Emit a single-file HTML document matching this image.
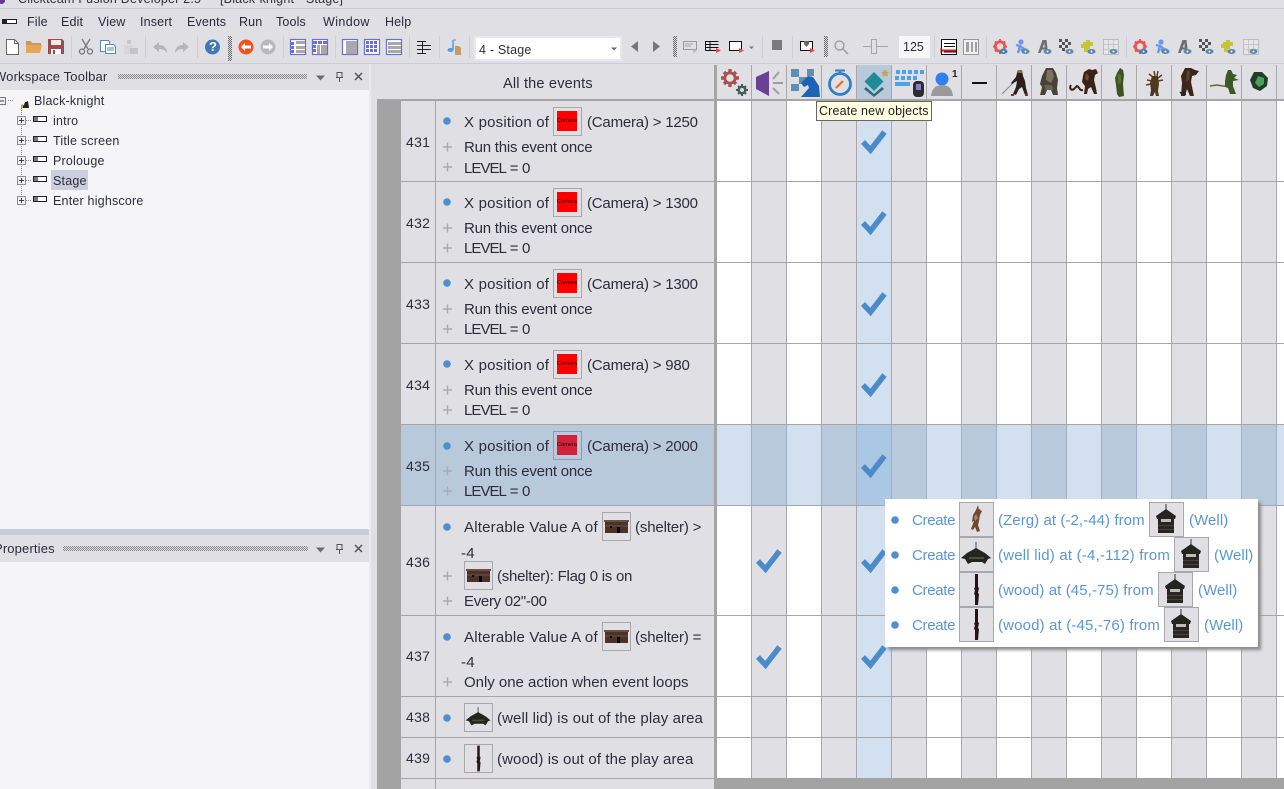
<!DOCTYPE html>
<html><head><meta charset="utf-8"><title>Clickteam Fusion Developer 2.5</title>
<style>
html,body{margin:0;padding:0;background:#dfdfe4}
body{width:1284px;height:789px;overflow:hidden;position:relative;font-family:"Liberation Sans",sans-serif;color:#2b2b38}
.b{position:absolute}
.t{position:absolute;white-space:nowrap;line-height:25px;font-size:15px;letter-spacing:.2px;color:#2d2d3a}
.n{font-size:14px;letter-spacing:.3px;line-height:20px}
.m{font-size:12.5px;letter-spacing:.15px;color:#2b2b3a;top:11px;line-height:23px}
.tr{font-size:12.5px;letter-spacing:.2px;line-height:23px}
.p{color:#5a96d6;letter-spacing:.07px;line-height:24px}
.c{letter-spacing:-.3px}
.cam{letter-spacing:-.2px}
.run{letter-spacing:-.22px}
.lv{letter-spacing:-.95px;word-spacing:1.2px}
.sh{letter-spacing:-.15px}
svg{position:absolute;left:0;top:0;overflow:visible}
</style></head><body>
<svg width="0" height="0" style="position:absolute">
<defs>
<pattern id="dp" width="2" height="2" patternUnits="userSpaceOnUse"><rect width="1" height="1" fill="#666"/><rect x="1" y="1" width="1" height="1" fill="#666"/></pattern>
<pattern id="dq" width="2" height="2" patternUnits="userSpaceOnUse"><rect width="1" height="1" fill="#8a8a8e"/><rect x="1" y="1" width="1" height="1" fill="#8a8a8e"/></pattern>
<symbol id="well" viewBox="0 0 35 35"><path d="M17 2v7" stroke="#333" stroke-width="1"/><path d="M17 7l10 7-1 3H8l-1-3z" fill="#23261f"/><path d="M9 16h16v15H9z" fill="#28261f"/><path d="M12 17h10v3H12z" fill="#bdbdb8"/><path d="M9 23h16v1H9zM9 27h16v1H9z" fill="#45443c"/></symbol>
<symbol id="lid" viewBox="0 0 35 35"><path d="M17 5v8" stroke="#444" stroke-width="1"/><path d="M17 11l9 5 6 5-3 1-3 5-3-2H13l-4 2-3-5-4-1 6-5z" fill="#22261e"/><path d="M10 20h15v2H10z" fill="#4a4c42"/></symbol>
<symbol id="wood" viewBox="0 0 35 35"><path d="M16 2h3v13l1 1-1 5 1 1-1 11h-3V23l-1-1 1-4-1-1 1-2z" fill="#2a1412"/></symbol>
<symbol id="zerg" viewBox="0 0 35 35"><path d="M19 3l1 5 3 1-2 4-1 6-1 4 1 3 1 3-3 1-2-5-2 3-2-1 3-8-2 1 1-7 3-5z" fill="#6e4a35"/><path d="M17 12l2 4-3 3-1-4z" fill="#a98468"/><path d="M20 7l2 1-2 2z" fill="#a53d28"/></symbol>
<symbol id="shelter" viewBox="0 0 29 29"><path d="M2 8h25v2H2z" fill="#6b4f45"/><path d="M3 10h23v11H3z" fill="#4b3229"/><path d="M3 13h23v2H3z" fill="#5e4238"/><path d="M15 15h3v6h-3zM8 14h2v2H8z" fill="#000"/></symbol>
<g id="gear-r"><circle cx="7" cy="7.5" r="4.7" fill="none" stroke="#ef5350" stroke-width="2.8"/><path d="M7 0v3M7 12v3M0 7.5h3M11 7.5h3M2 2.5l2 2M10 10.500l2 2M12 2.500l-2 2M2 12.500l2-2" stroke="#ef5350" stroke-width="2"/><ellipse cx="10.500" cy="12.500" rx="4" ry="2.500" fill="#3d7fb5"/><circle cx="10.500" cy="12.500" r="1" fill="#fff"/></g>
<g id="eye"><ellipse cx="10.500" cy="12.500" rx="4" ry="2.500" fill="#5b86aa"/><circle cx="10.500" cy="12.500" r="1" fill="#fff"/></g>
<g id="eyes">
<use href="#gear-r"/>
<g transform="translate(22 0)"><circle cx="6" cy="3" r="2.600" fill="#6d95ee"/><path d="M1 6l4 1 4 3 3 1M5 7L3 14M6 10l3 4" stroke="#6d95ee" stroke-width="2.400" fill="none"/><use href="#eye"/></g>
<g transform="translate(44 0)"><path d="M1 14L5.500 1H9.500L11 14H8.500L8 10.500H5L3.500 14zM5.800 8.500H7.800L7.300 4z" fill="#6e6e72"/><use href="#eye"/></g>
<g transform="translate(66 0)" fill="#555"><path d="M0 0h3v3H0zM6 0h3v3H6zM3 3h3v3H3zM9 3h3v3H9zM0 6h3v3H0zM6 6h3v3H6zM3 9h3v3H3z"/><use href="#eye"/></g>
<g transform="translate(88 0)"><path d="M2 3h3V1h4v2h3v4h-3v3H7v3H3V9H0V5h2z" fill="#c9c33c"/><use href="#eye"/></g>
<g transform="translate(110 0)"><rect x=".5" y=".5" width="15" height="15" fill="#e6e6e8" stroke="#bdbdbd"/><path d="M5.500 1v14M10.500 1v14M1 5.500h14M1 10.500h14" stroke="#c6c6c6"/><use href="#eye"/></g>
</g>
</defs></svg>

<!-- title -->
<div class="b" style="left:0;top:0;width:1284px;height:9px;overflow:hidden;border-bottom:1px solid #c9c9dc;box-sizing:border-box">
<div class="t" style="left:18px;top:-11px;font-size:12.500px;line-height:20px;color:#333">Clickteam Fusion Developer 2.5</div>
<div class="t" style="left:220px;top:-11px;font-size:12.500px;line-height:20px;color:#333">[Black-knight - Stage]</div>
<div class="b" style="left:-2px;top:-3px;width:7px;height:7px;border-radius:50%;background:#5b3a9c"></div>
</div>
<!-- menu -->
<div class="b" style="left:2px;top:19px;background:#fff;border:1px solid #222;border-left-width:5px;box-sizing:content-box;width:9px;height:3px"></div>
<div class="t m" style="left:27px">File</div><div class="t m" style="left:61px">Edit</div><div class="t m" style="left:98px">View</div><div class="t m" style="left:140px">Insert</div><div class="t m" style="left:187px">Events</div><div class="t m" style="left:239px">Run</div><div class="t m" style="left:276px">Tools</div><div class="t m" style="left:323px;letter-spacing:.4px">Window</div><div class="t m" style="left:385px">Help</div>
<div class="b" style="left:0;top:63px;width:1284px;height:1px;background:#cbcbdc"></div>

<!-- left panels -->
<div class="b" style="left:0;top:90px;width:369px;height:439px;background:#f5f5f8"></div>
<div class="b" style="left:0;top:529px;width:369px;height:6px;background:#c9cbdb"></div>
<div class="b" style="left:0;top:562px;width:369px;height:227px;background:#f5f5f8"></div>
<div class="b" style="left:369px;top:64px;width:2px;height:725px;background:#e9e9ee"></div>
<div class="t" style="left:-6px;top:67px;font-size:13px;letter-spacing:.15px;line-height:20px">Workspace Toolbar</div>
<div class="t" style="left:-6px;top:539px;font-size:13px;letter-spacing:.15px;line-height:20px">Properties</div>
<div class="b" style="left:51px;top:170px;width:37px;height:20px;background:#cccedd"></div>
<div class="t tr" style="left:34px;top:90px">Black-knight</div>
<div class="t tr" style="left:53px;top:110px">intro</div>
<div class="t tr" style="left:53px;top:130px">Title screen</div>
<div class="t tr" style="left:53px;top:150px">Prolouge</div>
<div class="t tr" style="left:53px;top:170px">Stage</div>
<div class="t tr" style="left:53px;top:190px">Enter highscore</div>

<!-- event editor base -->
<div class="b" style="left:377px;top:65px;width:907px;height:34px;background:#dfdfe4"></div>
<div class="b" style="left:377px;top:99px;width:24px;height:690px;background:#a3a3a3"></div>
<div class="b" style="left:377px;top:99px;width:907px;height:2px;background:#a5a5a5"></div>
<div class="b" style="left:717px;top:101px;width:567px;height:677px;background:repeating-linear-gradient(90deg,#fff 0 34px,#a8a8ac 34px 35px,#dfdfe4 35px 69px,#a8a8ac 69px 70px)"></div>
<div class="b" style="left:857px;top:65px;width:34px;height:34px;background:#b9c9dc"></div>
<div class="b" style="left:857px;top:101px;width:34px;height:677px;background:#d2e0f0"></div>
<div class="b" style="left:401px;top:425px;width:313px;height:80px;background:#b9c9dc"></div>
<div class="b" style="left:717px;top:425px;width:567px;height:80px;background:repeating-linear-gradient(90deg,#d2e0f0 0 34px,#9fb0c6 34px 35px,#b9c9dc 35px 69px,#9fb0c6 69px 70px)"></div>
<div class="b" style="left:857px;top:425px;width:34px;height:80px;background:#aac7e4"></div>
<div class="b" style="left:435px;top:101px;width:1px;height:688px;background:#a5a5aa"></div>
<div class="b" style="left:714px;top:65px;width:3px;height:713px;background:#a5a5a5"></div>
<div class="b" style="left:714px;top:778px;width:570px;height:11px;background:#a3a3a3"></div>
<div class="b" style="left:401px;top:181px;width:883px;height:1px;background:#a5a5aa"></div>
<div class="b" style="left:401px;top:262px;width:883px;height:1px;background:#a5a5aa"></div>
<div class="b" style="left:401px;top:343px;width:883px;height:1px;background:#a5a5aa"></div>
<div class="b" style="left:401px;top:424px;width:883px;height:1px;background:#a5a5aa"></div>
<div class="b" style="left:401px;top:505px;width:883px;height:1px;background:#a5a5aa"></div>
<div class="b" style="left:401px;top:615px;width:883px;height:1px;background:#a5a5aa"></div>
<div class="b" style="left:401px;top:696px;width:883px;height:1px;background:#a5a5aa"></div>
<div class="b" style="left:401px;top:737px;width:883px;height:1px;background:#a5a5aa"></div>
<div class="b" style="left:401px;top:778px;width:313px;height:1px;background:#a5a5aa"></div>
<div class="b" style="left:751px;top:65px;width:533px;height:34px;background:repeating-linear-gradient(90deg,#a8a8ac 0 1px,transparent 1px 35px)"></div>

<div class="t" style="left:503px;top:73px;font-size:14.500px;letter-spacing:.2px;line-height:22px">All the events</div>

<!-- big icon svg -->
<svg width="1284" height="789" viewBox="0 0 1284 789">
<!-- dotted grips -->
<g shape-rendering="crispEdges">
<rect x="118" y="74" width="189" height="5" fill="url(#dq)"/><rect x="63" y="546" width="245" height="5" fill="url(#dq)"/>
<rect x="228" y="36" width="4" height="25" fill="url(#dp)"/><rect x="673" y="36" width="4" height="21" fill="url(#dp)"/><rect x="824" y="36" width="4" height="21" fill="url(#dp)"/>
</g>
<!-- tree -->
<g fill="none" stroke="#8a8a8a" stroke-dasharray="1 1">
<path d="M21.500 108V200M8 100.500H14M26 120.500H32M26 140.500H32M26 160.500H32M26 180.500H32M26 200.500H32"/></g>
<g id="tree-boxes" fill="#f0f0f3" stroke="#8f8f8f">
<rect x="-2.500" y="97.500" width="8" height="7" stroke="#7a7a7a"/>
<rect x="17.500" y="116.500" width="8" height="8"/><rect x="17.500" y="136.500" width="8" height="8"/><rect x="17.500" y="156.500" width="8" height="8"/><rect x="17.500" y="176.500" width="8" height="8"/><rect x="17.500" y="196.500" width="8" height="8"/></g>
<path d="M0 101h4M19 120.500h5M21.500 118v5M19 140.500h5M21.500 138v5M19 160.500h5M21.500 158v5M19 180.500h5M21.500 178v5M19 200.500h5M21.500 198v5" stroke="#2e3a70" fill="none"/>
<path d="M21 107l3-2 1-3 1 0 2-1 1 7h-8z" fill="#222"/><path d="M21 105l2-1v4h-2z" fill="#c9a044"/>
<g fill="#fff" stroke="#222"><rect x="33.500" y="116.500" width="13" height="5"/><rect x="33.500" y="136.500" width="13" height="5"/><rect x="33.500" y="156.500" width="13" height="5"/><rect x="33.500" y="176.500" width="13" height="5"/><rect x="33.500" y="196.500" width="13" height="5"/></g>
<g fill="#777"><rect x="34" y="117" width="4" height="4"/><rect x="34" y="137" width="4" height="4"/><rect x="34" y="157" width="4" height="4"/><rect x="34" y="177" width="4" height="4"/><rect x="34" y="197" width="4" height="4"/></g>
<!-- panel controls -->
<g id="pc"><path d="M316 75.500h9l-4.500 5z" fill="#6a6a72"/><path d="M337 72.500h5v5h-5zM336 77.500h7M339.500 78v4" stroke="#55555f" fill="none"/><path d="M355 73l7 7M362 73l-7 7" stroke="#55555f" stroke-width="1.500"/></g>
<use href="#pc" y="472"/>

<!-- toolbar separators -->
<g stroke="#cfcfd9">
<path d="M71.500 36v22M145.500 36v22M197.500 36v22M283.500 36v22M335.500 36v22M409.500 36v22M439.500 36v22M469.500 36v22M762.500 36v22M792.500 36v22M934.500 36v22M986.500 36v22M1126.500 36v22"/></g>
<!-- toolbar left -->
<path d="M6.500 39.500h8l4 4v11h-12z" fill="#fff" stroke="#666"/><path d="M14.500 39.500v4h4" fill="none" stroke="#666"/>
<path d="M26 41h5l1 2h9v2H26z" fill="#c59a5a"/><path d="M26 45h16l-2 8H26z" fill="#e2a855"/>
<path d="M48 39h14l2 2v13H48z" fill="#a0494a"/><path d="M51 40h10v5H51z" fill="#eee"/><path d="M51 49h10v5H51z" fill="#fff"/><path d="M53 50h2v4h-2z" fill="#a0494a"/>
<path d="M82 39l6 10M90 39l-6 10" stroke="#777" stroke-width="1.300"/><circle cx="82" cy="51.500" r="2.500" fill="none" stroke="#777" stroke-width="1.300"/><circle cx="90" cy="51.500" r="2.500" fill="none" stroke="#777" stroke-width="1.300"/>
<path d="M100.500 40.500h8l1 1v10h-9z" fill="#fff" stroke="#5b86b8"/><path d="M105.500 44.500h8l2 2v7h-10z" fill="#fff" stroke="#5b86b8"/><path d="M107 48h7M107 50h7" stroke="#5b86b8"/>
<path d="M124 45h9v9h-9z" fill="#d7d7da"/><path d="M127 40h4v4h-4z" fill="#c6c6cc"/><path d="M130 48h8v6h-8z" fill="#c3c3c8"/>
<path d="M153 47l6-5v3c5 0 8 3 8 8-2-3-4-4-8-4v3z" fill="#b4b4b9"/>
<path d="M189 47l-6-5v3c-5 0-8 3-8 8 2-3 4-4 8-4v3z" fill="#b4b4b9"/>
<circle cx="212.500" cy="47" r="7.500" fill="#3f7ab5"/>
<circle cx="246" cy="47" r="7.500" fill="#f0531c"/><path d="M241 47l4-4v2.500h6v3h-6v2.500z" fill="#fff"/>
<circle cx="268" cy="47" r="7.500" fill="#b9b9bc"/><path d="M273 47l-4-4v2.500h-6v3h6v2.500z" fill="#fff"/>
<g fill="#fff" stroke="#6a6fd6" stroke-width="1.200">
<rect x="290.500" y="39.500" width="15" height="15"/><rect x="312.500" y="39.500" width="15" height="15"/><rect x="342.500" y="39.500" width="15" height="15"/><rect x="364.500" y="39.500" width="15" height="15"/><rect x="386.500" y="39.500" width="15" height="15"/></g>
<path d="M296 41h9v3h-9zM296 46h9v3h-9zM296 50h9v3h-9zM321 45h6v9h-6zM317 45h3v9h-3zM346 41h11v13h-11zM388 42h13v3h-13zM388 46h13v3h-13zM388 50h13v3h-13z" fill="#a9a9ad"/>
<path d="M291 42h3v3h-3zM291 46h3v3h-3zM291 50h3v3h-3zM313 41h4v3h-4zM318 41h4v3h-4zM323 41h4v3h-4zM313 45h3v3h-3zM313 49h3v3h-3zM366 41h3v3h-3zM370 41h3v3h-3zM374 41h3v3h-3zM366 45h3v3h-3zM370 45h3v3h-3zM374 45h3v3h-3zM366 49h3v3h-3zM370 49h3v3h-3zM374 49h3v3h-3z" fill="#6a6fd6"/>
<path d="M417 41.500h9M417 45.500h14M417 49.500h14M417 53.500h9M422.500 41v13" stroke="#222" fill="none"/>
<path d="M453 40v10" stroke="#4aa0dd" stroke-width="1.500"/><ellipse cx="450.500" cy="50" rx="3" ry="2" fill="#4aa0dd"/><path d="M453 40h3" stroke="#4aa0dd"/><path d="M455 46h4l2 2v7h-6z" fill="#c79c62"/>
<!-- combo -->
<rect x="475" y="37" width="146" height="23" fill="#fff" stroke="#e8e8ee" stroke-width="2"/>
<path d="M611 47.500h6l-3 3z" fill="#666"/>
<path d="M638 41v11l-7-5.500zM653 41v11l7-5.500z" fill="#777"/>
<path d="M683.500 41.500h13v8h-13z" fill="none" stroke="#999"/><path d="M685 44h8M685 46h6" stroke="#aaa"/><path d="M693 49l4 2-4 2z" fill="#bbb"/>
<path d="M705.500 41.500h13M705.500 44.500h13M705.500 47.500h13M705.500 50.500h11M705.500 41v9.500M710 41v9" stroke="#111" fill="none"/><path d="M716 48l5 2.500-5 2.500z" fill="#f04050"/>
<rect x="729.500" y="41.500" width="12" height="9" fill="#fff" stroke="#111"/><path d="M739 48l5 2.500-5 2.500z" fill="#f04050"/><path d="M749 46.500h5l-2.500 2.500z" fill="#777"/>
<rect x="772" y="40" width="10" height="10" fill="#7b7b7e"/>
<rect x="800.500" y="41.500" width="12" height="9" fill="#fff" stroke="#111"/><path d="M804 41h5v3l-2.500 3-2.500-3z" fill="#666"/><path d="M810 48l5 2.500-5 2.500z" fill="#f04050"/>
<circle cx="839.500" cy="45.500" r="4.500" fill="none" stroke="#999" stroke-width="1.300"/><path d="M843 49l5 5" stroke="#999" stroke-width="1.500"/>
<path d="M863 46.500h25" stroke="#a6a6aa"/><rect x="871.500" y="39.500" width="5" height="14" fill="#dfdfe4" stroke="#a6a6aa"/>
<rect x="899" y="36" width="31" height="22" fill="#f7f7f9"/>
<rect x="941.500" y="39.500" width="15" height="15" fill="#fff" stroke="#111"/><path d="M944 43.500h11M944 46.500h11M944 52h12" stroke="#111"/><path d="M942 50.500h14" stroke="#d71a1a" stroke-width="2"/><path d="M941 48v5" stroke="#d71a1a"/>
<rect x="963.500" y="39.500" width="15" height="15" fill="#f0f0f0" stroke="#999"/><path d="M966 42h3v10h-3zM971 42h2v10h-2zM975 42h2v10h-2z" fill="#a0a0a0"/>
<use href="#eyes" x="993" y="39"/>
<use href="#eyes" x="1133" y="39"/>

<!-- header icons -->
<path d="M730 69v18M721 78h18M724 72l12 12M736 72l-12 12" stroke="#a84f50" stroke-width="3.400"/><circle cx="730" cy="78" r="6.500" fill="#a84f50"/><circle cx="730" cy="78" r="3.800" fill="#dfdfe4"/>
<path d="M742 84v12M736 90h12M738 86l8 8M746 86l-8 8" stroke="#3f5f59" stroke-width="2"/><circle cx="742" cy="90" r="4.500" fill="#3f5f59"/><circle cx="742" cy="90" r="2" fill="#dfdfe4"/>
<path d="M756 77l13-6v25l-13-7z" fill="#6a3f96"/>
<path d="M773 79l6-7M773 83h10M773 88l6 6" stroke="#9aa0a4" stroke-width="2" fill="none"/>
<g fill="#5f8fb3"><rect x="791" y="69" width="8" height="8"/><rect x="799" y="77" width="8" height="7"/><rect x="791" y="84" width="8" height="7"/><rect x="807" y="69" width="7" height="7"/></g>
<path d="M808 76l5 1 6 9 1 11h-19l8-9-1-3-4 2-3-4z" fill="#1c62b5"/>
<circle cx="840" cy="84" r="10.500" fill="none" stroke="#2f7fc4" stroke-width="2.800"/><path d="M835 70.500h10M840 71v3" stroke="#2f7fc4" stroke-width="2"/><path d="M836 88l7-7" stroke="#e8701a" stroke-width="2.200"/>
<path d="M874 72l9.500 9.500-9.500 9.500-9.500-9.500z" fill="#1e8c96"/><path d="M866 87l8 7 8-7 2 2-10 8-10-8z" fill="#2a6f78"/><path d="M885 69l1.500 2.500 2.800.5-2 2 .4 2.800-2.700-1.300-2.600 1.300.4-2.800-2-2 2.800-.5z" fill="#c8a35a"/>
<g fill="#4aa3e8"><rect x="896" y="70" width="4" height="4"/><rect x="902" y="70" width="4" height="4"/><rect x="908" y="70" width="4" height="4"/><rect x="914" y="70" width="4" height="4"/><rect x="920" y="70" width="4" height="4"/><rect x="895" y="76" width="4" height="4"/><rect x="901" y="76" width="4" height="4"/><rect x="907" y="76" width="4" height="4"/><rect x="913" y="76" width="4" height="4"/><rect x="895" y="82" width="15" height="4"/></g>
<rect x="913" y="81" width="11" height="16" rx="4" fill="#2b2b30"/><rect x="916" y="84" width="5" height="6" fill="#8a7fc4"/>
<circle cx="942" cy="79" r="6.500" fill="#2e7ff0"/><path d="M931 96c1-8 5-11 11-11s10 3 11 11z" fill="#9a9a9a"/>
<text x="952" y="77" font-family="Liberation Sans,sans-serif" font-size="10" font-weight="bold" fill="#222">1</text>
<rect x="972" y="82" width="15" height="2" fill="#111"/>
<!-- sprites -->
<path d="M1002 94l12-12" stroke="#888" stroke-width="1"/><path d="M1018 70h4l1 6 2 5 1 7 2 7h-3l-3-8-3 2-3 6-3-1 3-7 1-6-2 1-3 2-1-1 5-6 1-4z" fill="#2d201c"/><path d="M1018 70h4v3h-4z" fill="#8a6f55"/><path d="M1011 94h3v2h-3zM1025 94h3v2h-3z" fill="#9a2a20"/>
<path d="M1046 68h7l3 5 2 7-1 8 1 7h-5l-2-5h-4l-2 5h-5l2-8-2-3 2-8z" fill="#4a4238"/><path d="M1047 70h5l2 7-3 6-5-3z" fill="#7b7465"/><path d="M1044 85h8l1 5h-7z" fill="#6a6254"/>
<path d="M1084 72l5-3 3 1 4-1 2 4-3 2-1 5 2 8 1 6h-3l-3-7-3 2-1 5h-3l1-8-3-4 1-6z" fill="#3a2316"/><path d="M1086 73l3 3-1 5-3-2z" fill="#6e4a30"/><path d="M1071 85c-2 3 0 6 3 4l3-3c3 1 2 5 6 4" fill="none" stroke="#3a2316" stroke-width="2"/>
<path d="M1120 68l3 2 1 5-1 9 1 12-5 1-2-3-1-9-1-7 2-5z" fill="#3f5223"/><path d="M1118 74l3 1v8l-3 1z" fill="#5a6e33"/>
<path d="M1147 80l5 1M1149 74l4 3M1154 71l1 5M1158 71l-1 5M1162 75l-4 3M1163 80l-5 1M1146 85l5-1" stroke="#5a4024" stroke-width="1.500" fill="none"/><path d="M1152 76h6l1 8-1 7 1 5h-3l-1-4-2 4h-3l1-6-1-7z" fill="#4f3720"/>
<path d="M1185 68h6l4 2 4 1-3 4-4 1-1 6 3 14h-4l-3-7-2 7h-4l1-13-1-7z" fill="#3b261c"/><path d="M1187 70l3 2-1 8-3 2z" fill="#5f4030"/><path d="M1180 92l3 3 3-1" fill="none" stroke="#222" stroke-width="1.500"/>
<path d="M1210 86l7-1 6 1 3 0" stroke="#5c6e2e" stroke-width="1.500" fill="none"/><path d="M1228 70l3 0 2 4 4 1-3 3 5 2-6 1 0 5 3 8h-6l-2-6-3-1 0-6 1-6z" fill="#3c5a28"/>
<path d="M1254 72h8l6 6-1 8-7 5-7-3-3-8z" fill="#1f3d28"/><path d="M1258 76l6 2 0 6-5 3-4-4z" fill="#4f9f5c"/>

<!-- check marks -->
<defs><path id="ck" d="M-12 1l7.500 8L9.500-9" fill="none" stroke="#4c8bc9" stroke-width="5.500"/></defs>
<use href="#ck" x="875" y="141"/><use href="#ck" x="875" y="222"/><use href="#ck" x="875" y="303"/><use href="#ck" x="875" y="384"/><use href="#ck" x="875" y="465"/><use href="#ck" x="875" y="560"/><use href="#ck" x="875" y="656"/><use href="#ck" x="770" y="560"/><use href="#ck" x="770" y="656"/>

<!-- bullets -->
<g fill="#4f8ecf"><circle cx="447" cy="121" r="3.800"/><circle cx="447" cy="202" r="3.800"/><circle cx="447" cy="283" r="3.800"/><circle cx="447" cy="364" r="3.800"/><circle cx="447" cy="446" r="3.800"/><circle cx="447" cy="527" r="3.800"/><circle cx="447" cy="637" r="3.800"/><circle cx="447" cy="718" r="3.800"/><circle cx="447" cy="759" r="3.800"/></g>
<path d="M443 147h9M447.500 142.500v9M443 167h9M447.500 162.500v9M443 228h9M447.500 223.500v9M443 248h9M447.500 243.500v9M443 309h9M447.500 304.500v9M443 329h9M447.500 324.500v9M443 390h9M447.500 385.500v9M443 410h9M447.500 405.500v9M443 471h9M447.500 466.500v9M443 491h9M447.500 486.500v9M443 576h9M447.500 571.500v9M443 601h9M447.500 596.500v9M443 682h9M447.500 677.500v9" stroke="#aaaaae" stroke-width="1.400" fill="none"/>

<!-- boxes -->
<g fill="none" stroke="#a8a8ac">
<rect x="553.500" y="107.500" width="28" height="28"/><rect x="553.500" y="188.500" width="28" height="28"/><rect x="553.500" y="269.500" width="28" height="28"/><rect x="553.500" y="350.500" width="28" height="28"/><rect x="553.500" y="431.500" width="28" height="28" stroke="#8c9bb0"/>
<rect x="602.500" y="512.500" width="28" height="28"/><rect x="464.500" y="561.500" width="28" height="28"/><rect x="602.500" y="622.500" width="28" height="28"/><rect x="464.500" y="703.500" width="28" height="28"/><rect x="464.500" y="744.500" width="28" height="28"/></g>
<g fill="#fe0000"><rect x="557" y="111" width="20" height="20"/><rect x="557" y="192" width="20" height="20"/><rect x="557" y="273" width="20" height="20"/><rect x="557" y="354" width="20" height="20"/></g>
<rect x="557" y="435" width="20" height="20" fill="#d2213a"/>
<g font-family="Liberation Sans,sans-serif" font-size="5.500" fill="#300" text-anchor="middle"><text x="567" y="122" textLength="20" lengthAdjust="spacingAndGlyphs">Camera</text><text x="567" y="203" textLength="20" lengthAdjust="spacingAndGlyphs">Camera</text><text x="567" y="284" textLength="20" lengthAdjust="spacingAndGlyphs">Camera</text><text x="567" y="365" textLength="20" lengthAdjust="spacingAndGlyphs">Camera</text><text x="567" y="446" textLength="20" lengthAdjust="spacingAndGlyphs">Camera</text></g>
<use href="#shelter" x="602" y="512" width="29" height="29"/><use href="#shelter" x="464" y="561" width="29" height="29"/><use href="#shelter" x="602" y="622" width="29" height="29"/>
<use href="#lid" x="464" y="703" width="29" height="29"/><use href="#wood" x="464" y="744" width="29" height="29"/>
</svg>

<div class="t" style="left:205px;top:37px;width:16px;text-align:center;color:#fff;font-weight:bold;font-size:13px;letter-spacing:0;line-height:20px">?</div>
<div class="t" style="left:479px;top:39px;font-size:12.500px;line-height:23px">4 - Stage</div>
<div class="t" style="left:903px;top:37px;font-size:12.500px;letter-spacing:0;line-height:20px">125</div>

<!-- numbers -->
<div class="t n" style="left:406px;top:132px">431</div>
<div class="t n" style="left:406px;top:213px">432</div>
<div class="t n" style="left:406px;top:294px">433</div>
<div class="t n" style="left:406px;top:375px">434</div>
<div class="t n" style="left:406px;top:456px">435</div>
<div class="t n" style="left:406px;top:552px">436</div>
<div class="t n" style="left:406px;top:646px">437</div>
<div class="t n" style="left:406px;top:707px">438</div>
<div class="t n" style="left:406px;top:748px">439</div>

<!-- text -->
<div class="t" style="left:464px;top:110px">X position of</div><div class="t cam" style="left:587px;top:110px">(Camera) &gt; 1250</div>
<div class="t run" style="left:464px;top:135px">Run this event once</div><div class="t lv" style="left:464px;top:156px">LEVEL = 0</div>
<div class="t" style="left:464px;top:191px">X position of</div><div class="t cam" style="left:587px;top:191px">(Camera) &gt; 1300</div>
<div class="t run" style="left:464px;top:216px">Run this event once</div><div class="t lv" style="left:464px;top:236px">LEVEL = 0</div>
<div class="t" style="left:464px;top:272px">X position of</div><div class="t cam" style="left:587px;top:272px">(Camera) &gt; 1300</div>
<div class="t run" style="left:464px;top:297px">Run this event once</div><div class="t lv" style="left:464px;top:317px">LEVEL = 0</div>
<div class="t" style="left:464px;top:353px">X position of</div><div class="t cam" style="left:587px;top:353px">(Camera) &gt; 980</div>
<div class="t run" style="left:464px;top:378px">Run this event once</div><div class="t lv" style="left:464px;top:398px">LEVEL = 0</div>
<div class="t" style="left:464px;top:434px">X position of</div><div class="t cam" style="left:587px;top:434px">(Camera) &gt; 2000</div>
<div class="t run" style="left:464px;top:459px">Run this event once</div><div class="t lv" style="left:464px;top:479px">LEVEL = 0</div>
<div class="t" style="left:464px;top:515px">Alterable Value A of</div><div class="t sh" style="left:635px;top:515px">(shelter) &gt;</div>
<div class="t" style="left:461px;top:541px">-4</div>
<div class="t" style="left:497px;top:564px;letter-spacing:-.25px">(shelter): Flag 0 is on</div>
<div class="t" style="left:464px;top:589px;letter-spacing:-.3px">Every 02''-00</div>
<div class="t" style="left:464px;top:625px">Alterable Value A of</div><div class="t sh" style="left:635px;top:625px">(shelter) =</div>
<div class="t" style="left:461px;top:650px">-4</div>
<div class="t" style="left:464px;top:670px;letter-spacing:-.02px">Only one action when event loops</div>
<div class="t" style="left:497px;top:706px;letter-spacing:.1px">(well lid) is out of the play area</div>
<div class="t" style="left:497px;top:747px;letter-spacing:.1px">(wood) is out of the play area</div>

<!-- tooltip -->
<div class="b" style="left:816px;top:101px;width:114px;height:18px;background:#ffffe1;border:1px solid #666"></div>
<div class="t" style="left:819px;top:101px;font-size:12.500px;letter-spacing:.15px;color:#222;line-height:21px">Create new objects</div>

<!-- popup -->
<div class="b" style="left:885px;top:499px;width:373px;height:148px;background:#fff;box-shadow:3px 3px 3px #8a8a8a">
<svg width="373" height="148" viewBox="885 499 373 148">
<g fill="#4f8ecf"><circle cx="895" cy="520" r="3.800"/><circle cx="895" cy="555" r="3.800"/><circle cx="895" cy="590" r="3.800"/><circle cx="895" cy="625" r="3.800"/></g>
<g fill="#e0e0e4" stroke="#a8a8ac">
<rect x="959.500" y="502.500" width="34" height="34"/><rect x="959.500" y="537.500" width="34" height="34"/><rect x="959.500" y="572.500" width="34" height="34"/><rect x="959.500" y="607.500" width="34" height="34"/>
<rect x="1149.500" y="502.500" width="34" height="34"/><rect x="1174.500" y="537.500" width="34" height="34"/><rect x="1158.500" y="572.500" width="34" height="34"/><rect x="1164.500" y="607.500" width="34" height="34"/></g>
<use href="#zerg" x="959" y="502" width="35" height="35"/><use href="#lid" x="959" y="537" width="35" height="35"/><use href="#wood" x="959" y="572" width="35" height="35"/><use href="#wood" x="959" y="607" width="35" height="35"/>
<use href="#well" x="1149" y="502" width="35" height="35"/><use href="#well" x="1174" y="537" width="35" height="35"/><use href="#well" x="1158" y="572" width="35" height="35"/><use href="#well" x="1164" y="607" width="35" height="35"/>
</svg>
<div class="t p c" style="left:27px;top:10px">Create</div><div class="t p" style="left:113px;top:10px">(Zerg) at (-2,-44) from</div><div class="t p" style="left:304px;top:10px">(Well)</div>
<div class="t p c" style="left:27px;top:45px">Create</div><div class="t p" style="left:113px;top:45px;letter-spacing:.2px">(well lid) at (-4,-112) from</div><div class="t p" style="left:329px;top:45px">(Well)</div>
<div class="t p c" style="left:27px;top:80px">Create</div><div class="t p" style="left:113px;top:80px;letter-spacing:.1px">(wood) at (45,-75) from</div><div class="t p" style="left:313px;top:80px">(Well)</div>
<div class="t p c" style="left:27px;top:115px">Create</div><div class="t p" style="left:113px;top:115px;letter-spacing:.15px">(wood) at (-45,-76) from</div><div class="t p" style="left:319px;top:115px">(Well)</div>
</div>
</body></html>
